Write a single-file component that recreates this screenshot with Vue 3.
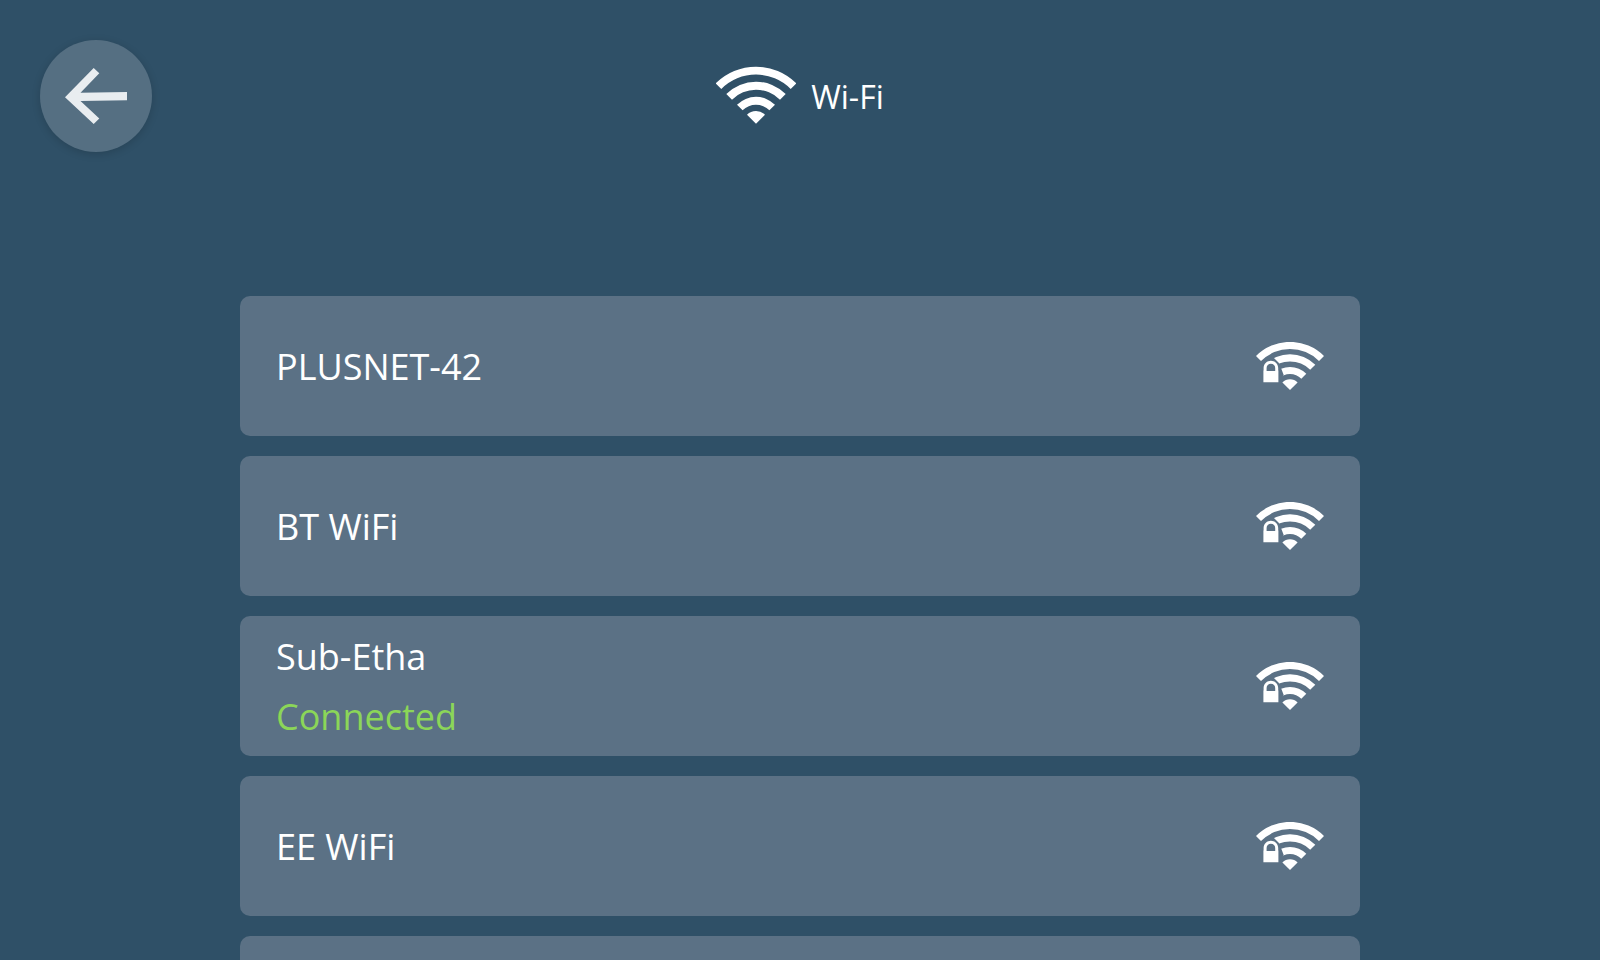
<script setup>
const networks = [
  { name: 'PLUSNET-42' },
  { name: 'BT WiFi' },
  { name: 'Sub-Etha', status: 'Connected' },
  { name: 'EE WiFi' },
  { name: '' },
]
</script>

<template>
  <main class="page">
    <header class="header">
      <button class="back" type="button" aria-label="Back">
        <svg viewBox="0 0 112 112" aria-hidden="true">
          <path d="M25 57.2 L53.7 28 L59.3 33.2 L40.5 52.7 L87 52 L87 60.2 L40.5 61 L59.3 78.6 L53.7 84 Z" />
        </svg>
      </button>
      <h1 class="title">
        <svg class="title-icon" viewBox="-40 -57.7 80 60" aria-hidden="true">
          <path d="M-40.3 -40.3 A57 57 0 0 1 40.3 -40.3 L34.7 -34.7 A49 49 0 0 0 -34.7 -34.7 Z" />
          <path d="M-29.7 -29.7 A42 42 0 0 1 29.7 -29.7 L24 -24 A34 34 0 0 0 -24 -24 Z" />
          <path d="M-19 -19 A26.9 26.9 0 0 1 19 -19 L13.4 -13.4 A19 19 0 0 0 -13.4 -13.4 Z" />
          <path d="M-9 -9 A12.7 12.7 0 0 1 9 -9 L0 0 Z" />
        </svg>
        <span>Wi-Fi</span>
      </h1>
    </header>

    <ul class="networks">
      <li v-for="(network, i) in networks" :key="i">
        <button class="network" type="button" :disabled="!network.name">
          <span class="labels">
            <span>{{ network.name }}</span>
            <span v-if="network.status" class="status">{{ network.status }}</span>
          </span>
          <svg v-if="network.name" class="signal" viewBox="-34 -48 68 50" aria-hidden="true">
            <mask :id="`lock-gap-${i}`" maskUnits="userSpaceOnUse" x="-34" y="-48" width="68" height="50">
              <rect x="-34" y="-48" width="68" height="50" fill="#fff" />
              <path d="M-34 0 V-24 L-19 -35 L-11.3 -27.3 L-8.5 -20.7 L-6.3 -15 L-9 -11 V0 Z" fill="#000" />
            </mask>
            <g :mask="`url(#lock-gap-${i})`">
              <path d="M-34 -34 A48 48 0 0 1 34 -34 L29 -29 A41 41 0 0 0 -29 -29 Z" />
              <path d="M-25.3 -25.3 A35.8 35.8 0 0 1 25.3 -25.3 L20.2 -20.2 A28.6 28.6 0 0 0 -20.2 -20.2 Z" />
              <path d="M-16.3 -16.3 A23 23 0 0 1 16.3 -16.3 L11.3 -11.3 A16 16 0 0 0 -11.3 -11.3 Z" />
              <path d="M-7.6 -7.6 A10.7 10.7 0 0 1 7.6 -7.6 L0 0 Z" />
            </g>
            <path fill-rule="evenodd" d="M-26.6 -7.7 V-19.5 H-26.4 V-22 C-26.4 -26.5 -22.7 -29.3 -19.1 -29.3 C-15.5 -29.3 -11.8 -26.5 -11.8 -22 V-19.5 H-11.6 V-7.7 Z M-23.4 -19 H-14.8 V-22 C-14.8 -24.6 -16.6 -26.3 -19.1 -26.3 C-21.6 -26.3 -23.4 -24.6 -23.4 -22 Z" />
          </svg>
        </button>
      </li>
    </ul>
  </main>
</template>

<style>
body {
  margin: 0;
  background: #2f5067;
}
</style>

<style scoped>
.page {
  box-sizing: border-box;
  height: 100vh;
  overflow: hidden;
  background: #2f5067;
  color: #fff;
  font-family: "Open Sans", "Noto Sans", sans-serif;
}

.header {
  display: grid;
  grid-template-columns: 112px 1fr 112px;
  align-items: center;
  padding: 40px;
}

.back {
  width: 112px;
  height: 112px;
  padding: 0;
  border: 0;
  border-radius: 50%;
  background: #556f82;
  box-shadow: 0 2px 8px rgba(0, 0, 0, 0.16);
  cursor: pointer;
}

.back svg {
  display: block;
  width: 100%;
  fill: #e9edf0;
}

.title {
  display: flex;
  align-items: center;
  justify-content: center;
  gap: 15px;
  margin: 0;
  font-size: 32px;
  font-weight: 400;
  line-height: 48px;
}

.title span {
  padding-top: 2px;
}

.title-icon {
  width: 80px;
  height: 60px;
  fill: #fff;
}

.networks {
  display: flex;
  flex-direction: column;
  gap: 20px;
  width: 70%;
  margin: 104px auto 0;
  padding: 0;
  list-style: none;
}

.network {
  display: flex;
  align-items: center;
  justify-content: space-between;
  box-sizing: border-box;
  width: 100%;
  min-height: 140px;
  padding: 11px 36px 9px;
  border: 0;
  border-radius: 10px;
  background: #5b7185;
  color: inherit;
  font: inherit;
  font-size: 36px;
  line-height: 60px;
  text-align: left;
  cursor: pointer;
}

.labels {
  display: flex;
  flex-direction: column;
}

.status {
  color: #8bd658;
}

.signal {
  width: 68px;
  height: 50px;
  fill: #fff;
}
</style>
